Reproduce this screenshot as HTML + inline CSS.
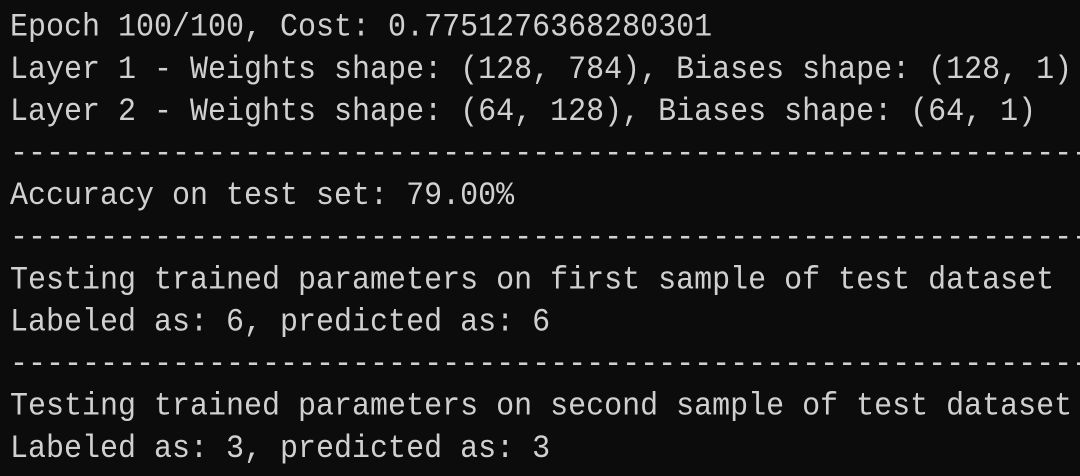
<!DOCTYPE html>
<html><head><meta charset="utf-8"><style>
html,body{margin:0;padding:0;background:#0c0c0c;width:1080px;height:476px;overflow:hidden}
pre{margin:0;padding:7px 0 0 10px;font-family:"Liberation Mono",monospace;font-size:30px;line-height:38.95px;color:#d0d0d0;white-space:pre;transform:scaleY(1.08);transform-origin:0 0}
</style></head><body><pre>Epoch 100/100, Cost: 0.7751276368280301
Layer 1 - Weights shape: (128, 784), Biases shape: (128, 1)
Layer 2 - Weights shape: (64, 128), Biases shape: (64, 1)
------------------------------------------------------------
Accuracy on test set: 79.00%
------------------------------------------------------------
Testing trained parameters on first sample of test dataset
Labeled as: 6, predicted as: 6
------------------------------------------------------------
Testing trained parameters on second sample of test dataset
Labeled as: 3, predicted as: 3</pre></body></html>
